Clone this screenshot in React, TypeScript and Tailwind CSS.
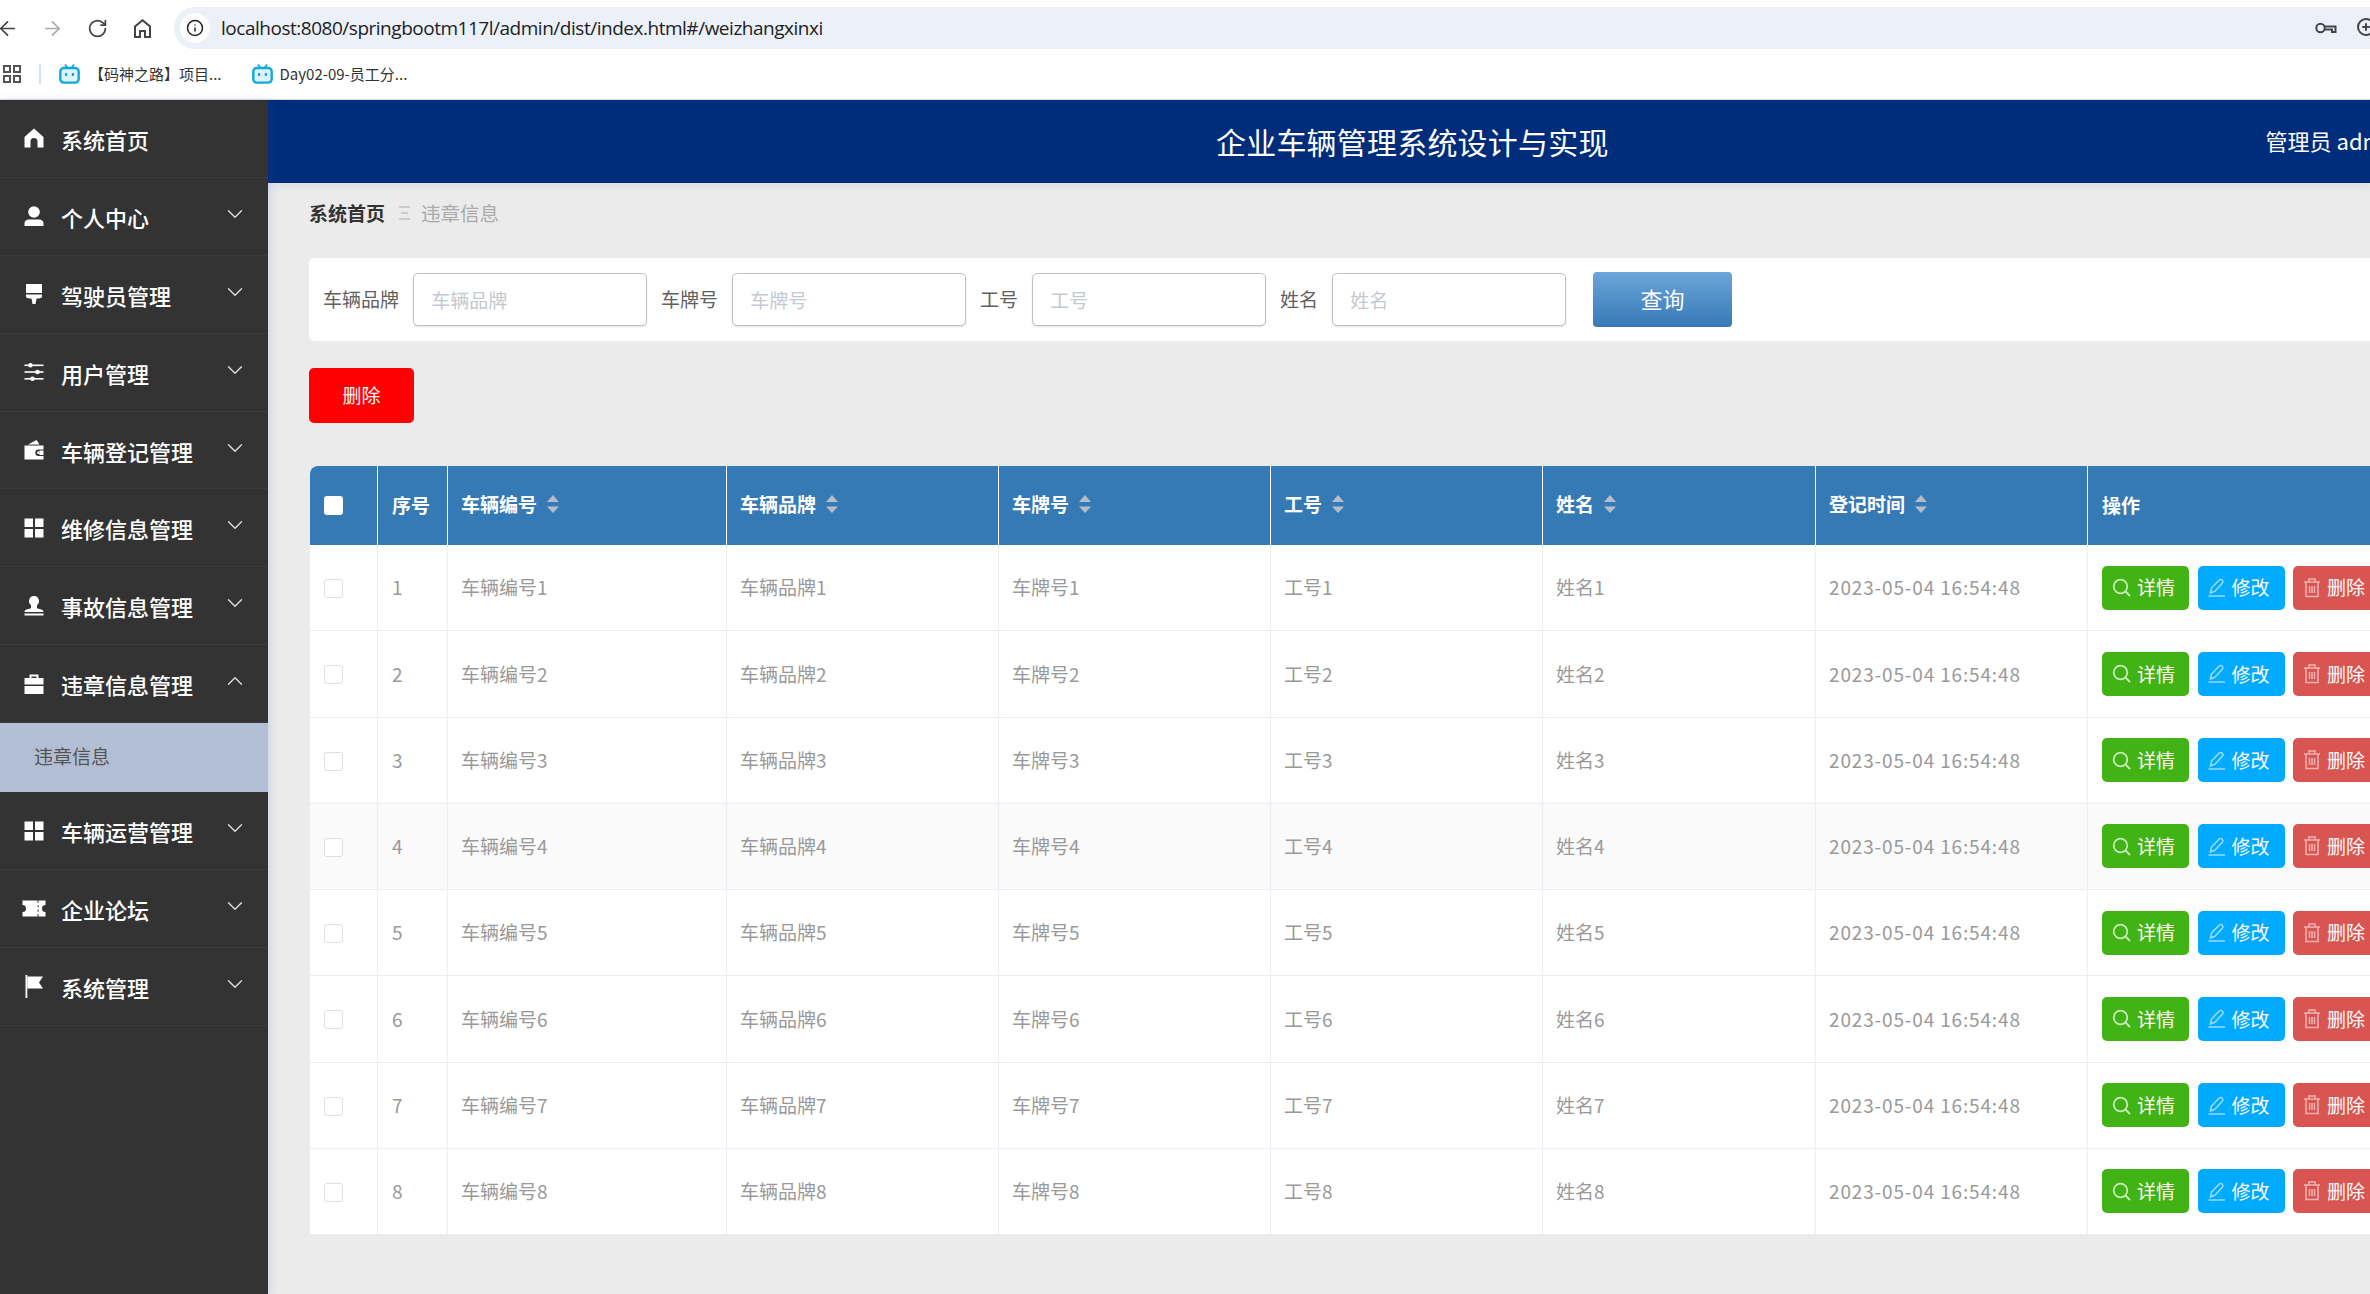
import { ArrowLeft, ArrowRight, ChevronDown, ChevronUp, Info, RotateCw, ZoomIn } from "lucide-react";

const cols = "grid grid-cols-[68px_70px_279px_272px_272px_272px_273px_272px_300px]";

function Svg({ children, w = 20, h = 20, vb = "0 0 20 20" }: { children: React.ReactNode; w?: number; h?: number; vb?: string }) {
  return (
    <svg width={w} height={h} viewBox={vb} fill="white" className="shrink-0">
      {children}
    </svg>
  );
}

const HomeIcon = () => (
  <Svg>
    <path d="M10 0.5 L0.5 9 V19.5 H6.5 V13.5 a3.5 3.5 0 0 1 7 0 V19.5 H19.5 V9 Z" />
  </Svg>
);
const UserIcon = () => (
  <Svg>
    <circle cx="10" cy="6" r="5.8" />
    <path d="M0.5 20 V17.5 C0.5 14.5 3 13.5 5 13.5 H15 C17 13.5 19.5 14.5 19.5 17.5 V20 Z" />
  </Svg>
);
const BrushIcon = () => (
  <Svg>
    <path d="M2 0 H18 V9 H2 Z M2 10.5 H18 V12.5 C18 14 16 14.5 12.5 14.5 L11.5 20 H8.5 L7.5 14.5 C4 14.5 2 14 2 12.5 Z" />
  </Svg>
);
const SlidersIcon = () => (
  <Svg>
    <rect x="0.5" y="2.5" width="19" height="1.6" />
    <rect x="0.5" y="9.2" width="19" height="1.6" />
    <rect x="0.5" y="16" width="19" height="1.6" />
    <circle cx="6.5" cy="3.3" r="2.3" />
    <circle cx="13.5" cy="10" r="2.3" />
    <circle cx="8.5" cy="16.8" r="2.3" />
  </Svg>
);
const WalletIcon = () => (
  <Svg>
    <path d="M4 4.5 L12.5 0 L15.5 4.5 Z" />
    <path
      fillRule="evenodd"
      d="M0.5 5.5 H19.5 V9.5 H14.5 a3.2 3.2 0 0 0 0 6.4 H19.5 V19.5 H0.5 Z M14.5 11.3 a1.4 1.4 0 1 0 0.01 0 Z M15.5 10.5 H19.5 V15 H15.5 Z"
    />
  </Svg>
);
const GridIcon = () => (
  <Svg>
    <rect x="0.5" y="0.5" width="8.5" height="8.5" />
    <rect x="11" y="0.5" width="8.5" height="8.5" />
    <rect x="0.5" y="11" width="8.5" height="8.5" />
    <rect x="11" y="11" width="8.5" height="8.5" />
  </Svg>
);
const StampIcon = () => (
  <Svg>
    <path d="M10 0 a5 5 0 0 1 3 9 V12 C13 13.2 19.5 12.5 19.5 16 H0.5 C0.5 12.5 7 13.2 7 12 V9 a5 5 0 0 1 3 -9 Z" />
    <rect x="0.5" y="17.5" width="19" height="2" />
  </Svg>
);
const CaseIcon = () => (
  <Svg>
    <path
      fillRule="evenodd"
      d="M5.5 4 V0.5 H14.5 V4 H19.5 V10.5 H0.5 V4 Z M7.5 2.5 V4 H12.5 V2.5 Z"
    />
    <rect x="0.5" y="12" width="19" height="8" />
  </Svg>
);
const TicketIcon = () => (
  <Svg w={24} h={17} vb="0 0 24 17">
    <path d="M0.5 0.5 H15.5 V3 H16.5 V0.5 H23.5 V5 a3.5 3.5 0 0 0 0 7 V16.5 H16.5 V14 H15.5 V16.5 H0.5 V12 a3.5 3.5 0 0 0 0 -7 Z" />
    <rect x="15.7" y="5" width="0.9" height="2.4" fill="#333333" />
    <rect x="15.7" y="9.4" width="0.9" height="2.4" fill="#333333" />
  </Svg>
);
const FlagIcon = () => (
  <Svg w={20} h={23} vb="0 0 20 23">
    <rect x="1.5" y="0" width="1.8" height="23" />
    <path d="M3.3 1.5 H19 L15 7.5 L19 13.5 H3.3 Z" />
  </Svg>
);

type NavItem = { label: string; icon: React.ReactNode; arrow?: boolean; open?: boolean };

const navItems: NavItem[] = [
  { label: "系统首页", icon: <HomeIcon /> },
  { label: "个人中心", icon: <UserIcon />, arrow: true },
  { label: "驾驶员管理", icon: <BrushIcon />, arrow: true },
  { label: "用户管理", icon: <SlidersIcon />, arrow: true },
  { label: "车辆登记管理", icon: <WalletIcon />, arrow: true },
  { label: "维修信息管理", icon: <GridIcon />, arrow: true },
  { label: "事故信息管理", icon: <StampIcon />, arrow: true },
  { label: "违章信息管理", icon: <CaseIcon />, arrow: true, open: true },
  { label: "车辆运营管理", icon: <GridIcon />, arrow: true },
  { label: "企业论坛", icon: <TicketIcon />, arrow: true },
  { label: "系统管理", icon: <FlagIcon />, arrow: true },
];

function BiliIcon() {
  return (
    <svg width="21" height="20" viewBox="0 0 21 20" className="shrink-0">
      <path d="M6 0.5 L8.5 4 M15 0.5 L12.5 4" stroke="#12a8de" strokeWidth="1.8" />
      <rect x="1.3" y="4" width="18.4" height="14.6" rx="3.5" fill="#dff3fb" stroke="#12a8de" strokeWidth="2.4" />
      <rect x="6" y="9" width="2.2" height="3" fill="#12a8de" />
      <rect x="12.8" y="9" width="2.2" height="3" fill="#12a8de" />
    </svg>
  );
}

function BrowserBar() {
  return (
    <div className="h-[100px] shrink-0 border-b border-[#dcdcdc] bg-white text-[#444]">
      <div className="flex h-[49px] items-end">
        <div className="-ml-[15px] flex h-[42px] items-center">
          <span className="flex w-[45px] justify-center">
            <ArrowLeft size={23} strokeWidth={1.8} />
          </span>
          <span className="flex w-[45px] justify-center text-[#aaa]">
            <ArrowRight size={23} strokeWidth={1.8} />
          </span>
          <span className="flex w-[45px] justify-center">
            <RotateCw size={21} strokeWidth={2} />
          </span>
          <span className="flex w-[45px] justify-center">
            <svg width="17" height="19" viewBox="0 0 17 19" fill="none" stroke="#444" strokeWidth="2">
              <path d="M8.5 1.2 L1 7.5 V18 H6 V12 H11 V18 H16 V7.5 Z" />
            </svg>
          </span>
        </div>
        <div className="ml-[9px] flex h-[42px] flex-1 items-center rounded-l-full bg-[#ebf0f9]">
          <span className="ml-[6px] flex h-[30px] w-[30px] items-center justify-center rounded-full bg-white">
            <Info size={18} strokeWidth={2} className="text-[#222]" />
          </span>
          <span className="ml-[11px] font-['Open_Sans',sans-serif] text-[19px] tracking-[-0.48px] text-[#222]">
            localhost:8080/springbootm117l/admin/dist/index.html#/weizhangxinxi
          </span>
          <span className="-mr-[9px] ml-auto flex items-center gap-[18px]">
            <svg width="22" height="12" viewBox="0 0 22 12" fill="none" stroke="#444" strokeWidth="2">
              <circle cx="5.5" cy="6" r="4.2" />
              <path d="M9.5 4.5 H20.5 V10 H17 V7.5 H9.5" />
            </svg>
            <ZoomIn size={24} strokeWidth={2} />
          </span>
        </div>
      </div>
      <div className="flex h-[50px] items-center text-[15px] text-[#333]">
        <svg width="18" height="18" viewBox="0 0 18 18" fill="none" stroke="#555" strokeWidth="2" className="-mt-[1px] ml-[3px]">
          <rect x="1" y="1" width="6" height="6" />
          <rect x="11" y="1" width="6" height="6" />
          <rect x="1" y="11" width="6" height="6" />
          <rect x="11" y="11" width="6" height="6" />
        </svg>
        <span className="ml-[18px] h-[20px] w-[2px] bg-[#d3e2fb]" />
        <span className="ml-[18px] flex items-center gap-[9px]">
          <BiliIcon />
          【码神之路】项目...
        </span>
        <span className="ml-[30px] flex items-center gap-[7px]">
          <BiliIcon />
          Day02-09-员工分...
        </span>
      </div>
    </div>
  );
}

function Sidebar() {
  return (
    <aside className="z-10 w-[268px] shrink-0 bg-[#333333] text-white shadow-[3px_0_8px_rgba(40,90,190,0.14)]">
      {navItems.map((item) => (
        <div key={item.label}>
          <div className="flex h-[77.9px] items-center border-b border-[#3c3c3c] pl-[24px] pr-[20px]">
            <span className="flex w-[20px] justify-center">{item.icon}</span>
            <span className="ml-[17px] mt-[1px] text-[22px] font-medium leading-none">{item.label}</span>
            {item.arrow && (
              <span className="-mt-[5px] ml-auto text-[#ddd]">
                {item.open ? <ChevronUp size={26} strokeWidth={1.3} /> : <ChevronDown size={26} strokeWidth={1.3} />}
              </span>
            )}
          </div>
          {item.open && (
            <div className="flex h-[69px] items-center bg-[#b2bed3] pb-[3px] pl-[34px] text-[19px] text-[#555]">违章信息</div>
          )}
        </div>
      ))}
    </aside>
  );
}

function SearchField({ label, labelWidth }: { label: string; labelWidth: string }) {
  return (
    <>
      <span className={`${labelWidth} shrink-0 whitespace-nowrap text-[#606060]`}>{label}</span>
      <input
        placeholder={label}
        className="h-[53px] w-[233.4px] shrink-0 rounded-[5px] border border-[#c0c0c0] bg-white px-[17px] pb-[1px] shadow-[0_1px_2px_rgba(0,0,0,0.12)] outline-none placeholder:text-[#c4c8d0]"
      />
    </>
  );
}

function SortCaret() {
  return (
    <svg width="12" height="18" viewBox="0 0 12 18" className="ml-[10px] shrink-0" fill="#b4bcc8">
      <path d="M6 0 L12 7 H0 Z" />
      <path d="M6 18 L12 11.5 H0 Z" />
    </svg>
  );
}

function ActionButton({ color, label, icon }: { color: string; label: string; icon: React.ReactNode }) {
  return (
    <button className={`flex h-[44px] w-[87px] shrink-0 items-center gap-[6px] rounded-[5px] pl-[10px] text-[19px] text-white ${color}`}>
      {icon}
      {label}
    </button>
  );
}

const headers = ["车辆编号", "车辆品牌", "车牌号", "工号", "姓名", "登记时间"];
const cell = "flex items-center border-r border-[#ebeef5] pl-[13px]";

function DataTable() {
  return (
    <div className="ml-[1px] mt-[43px] w-[2100px] overflow-hidden rounded-t-[8px] bg-white text-[19px]">
      <div className={`${cols} h-[79px] bg-[#3579b5] font-bold text-white`}>
        <div className="flex items-center border-r border-white pl-[14px]">
          <span className="h-[19px] w-[19px] rounded-[3px] bg-white" />
        </div>
        <div className="flex items-center border-r border-white pl-[14px]">序号</div>
        {headers.map((h) => (
          <div key={h} className="flex items-center border-r border-white pb-[3px] pl-[13px]">
            {h}
            <SortCaret />
          </div>
        ))}
        <div className="flex items-center pl-[14px]">操作</div>
      </div>
      {[1, 2, 3, 4, 5, 6, 7, 8].map((n) => (
        <div key={n} className={`${cols} h-[86.25px] border-b border-[#ebeef5] text-[#999] ${n === 4 ? "bg-[#fafafa]" : "bg-white"}`}>
          <div className="flex items-center border-r border-[#ebeef5] pl-[14px]">
            <span className="mt-[2px] h-[19px] w-[19px] rounded-[3px] border border-[#dcdfe6] bg-white" />
          </div>
          <div className="flex items-center border-r border-[#ebeef5] pl-[14px]">{n}</div>
          <div className={cell}>车辆编号{n}</div>
          <div className={cell}>车辆品牌{n}</div>
          <div className={cell}>车牌号{n}</div>
          <div className={cell}>工号{n}</div>
          <div className={cell}>姓名{n}</div>
          <div className={`${cell} tracking-[0.85px]`}>2023-05-04 16:54:48</div>
          <div className="flex items-center gap-[8.5px] pl-[14px]">
            <ActionButton
              color="bg-[#41b314]"
              label="详情"
              icon={
                <svg width="19" height="19" viewBox="0 0 19 19" fill="none" stroke="#c9ecbc" strokeWidth="1.8">
                  <circle cx="8.5" cy="8.5" r="6.8" />
                  <path d="M13.5 13.5 L18 18" />
                </svg>
              }
            />
            <ActionButton
              color="bg-[#00aaff]"
              label="修改"
              icon={
                <svg width="18" height="19" viewBox="0 0 18 19" fill="none" stroke="#a6dffc" strokeWidth="1.4">
                  <path d="M2.5 15 L3.5 10 L11 2.2 C12 1.2 13.3 1.2 14.3 2.2 C15.2 3.2 15.2 4.2 14.3 5.2 L7 13.2 Z" />
                  <path d="M0.5 18 H17" />
                </svg>
              }
            />
            <ActionButton
              color="bg-[#d95552]"
              label="删除"
              icon={
                <svg width="18" height="20" viewBox="0 0 18 20" fill="none" stroke="#efb4b2" strokeWidth="1.5">
                  <path d="M1 4 H17 M6 4 V1 H12 V4 M3 4 V18.5 H15 V4 M6.5 8 V15 M9 8 V15 M11.5 8 V15" />
                </svg>
              }
            />
          </div>
        </div>
      ))}
    </div>
  );
}

export default function App() {
  return (
    <div className="flex h-[1294px] w-[2370px] flex-col overflow-hidden bg-[#ebebeb] font-['Noto_Sans_CJK_SC',sans-serif]">
      <BrowserBar />
      <div className="flex min-h-0 flex-1">
        <Sidebar />
        <main className="min-w-0 flex-1">
          <header className="flex h-[83px] items-center whitespace-nowrap bg-[#002d7b] pl-[948px] text-white shadow-[0_3px_8px_rgba(30,60,110,0.08)]">
            <span className="-mt-[1px] text-[30px] leading-none tracking-[0.2px]">企业车辆管理系统设计与实现</span>
            <span className="-mt-[4px] ml-[657px] text-[22px] leading-none">管理员 admin</span>
          </header>
          <div className="pl-[41px]">
            <nav className="flex h-[75px] items-center pb-[15px] text-[19px]">
              <span className="font-bold text-[#333]">系统首页</span>
              <svg width="11" height="14" viewBox="0 0 11 14" fill="#ccc" className="ml-[14px]">
                <rect x="0" y="0" width="11" height="2" />
                <rect x="2" y="6" width="7" height="2" />
                <rect x="0" y="12" width="11" height="2" />
              </svg>
              <span className="ml-[11px] text-[19.5px] text-[#aaa]">违章信息</span>
            </nav>
            <div className="flex h-[83px] w-[2100px] items-center gap-[14.3px] rounded-[5px] bg-white pl-[14px] text-[19px]">
              <SearchField label="车辆品牌" labelWidth="w-[76px]" />
              <SearchField label="车牌号" labelWidth="w-[57px]" />
              <SearchField label="工号" labelWidth="w-[38px]" />
              <SearchField label="姓名" labelWidth="w-[38px]" />
              <button className="mb-[1px] ml-[13px] h-[55px] w-[139px] rounded-[4px] bg-gradient-to-b from-[#6ba6da] to-[#3779b6] pb-[2px] text-[22px] text-white">
                查询
              </button>
            </div>
            <button className="mt-[27px] h-[55px] w-[105px] rounded-[5px] bg-[#ff0000] pb-[1px] text-[19px] text-white">删除</button>
            <DataTable />
          </div>
        </main>
      </div>
    </div>
  );
}
